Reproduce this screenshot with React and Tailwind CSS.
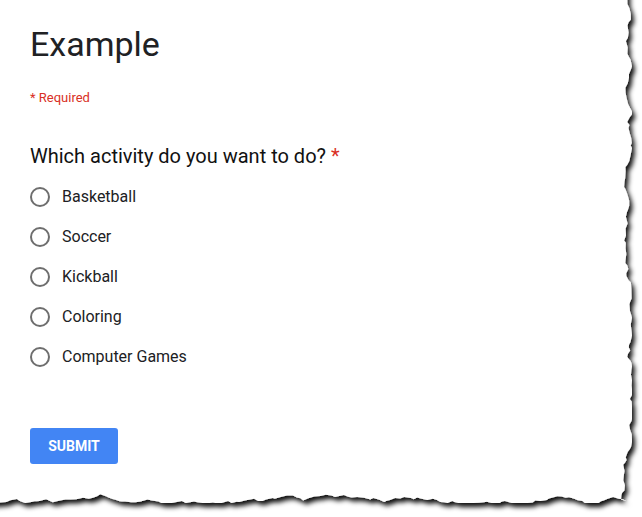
import React from 'react';

// deterministic jitter so the torn edge is the same on every render
function makeRand(seed) {
    let s = seed;
    return () => {
        s = (s * 1103515245 + 12345) % 2147483648;
        return s / 2147483648;
    };
}

function tornPath() {
    const rand = makeRand(42);
    const pts = [[-20, -20], [627, -20]];
    let x = 627;
    for (let y = 4; y < 500; y += 2 + rand() * 5) {
        x += (rand() - 0.5) * 5;
        x = Math.max(621, Math.min(632, x));
        pts.push([x, y]);
    }
    let y = 500;
    for (let xx = 626; xx > -10; xx -= 2 + rand() * 5) {
        y += (rand() - 0.5) * 4.5;
        y = Math.max(493, Math.min(503, y));
        pts.push([xx, y]);
    }
    pts.push([-20, 497]);
    return 'M' + pts.map((p) => `${p[0].toFixed(1)},${p[1].toFixed(1)}`).join(' L') + ' Z';
}

const PAPER = tornPath();

const options = ['Basketball', 'Soccer', 'Kickball', 'Coloring', 'Computer Games'];

export default function App() {
    return (
        <div className="relative h-[517px] w-[642px] overflow-hidden bg-white font-['Roboto',sans-serif]">
            <svg className="absolute inset-0" width="642" height="517">
                <defs>
                    <filter id="torn" x="-10%" y="-10%" width="120%" height="120%">
                        <feDropShadow dx="3" dy="4" stdDeviation="2.8" floodColor="#000" floodOpacity="0.95" />
                    </filter>
                </defs>
                <path d={PAPER} fill="#fff" filter="url(#torn)" />
            </svg>

            <div className="relative pl-[30px] pt-[22px]">
                <h1 className="text-[34px] leading-[44px] text-[#202124]">Example</h1>
                <p className="mt-[23px] text-[13px] leading-[18px] text-[#d93025]">* Required</p>

                <h2 className="mt-[37px] text-[20px] leading-[24px] text-[#111]">
                    Which activity do you want to do? <span className="text-[#d93025]">*</span>
                </h2>

                <div className="mt-[9px] flex flex-col">
                    {options.map((opt) => (
                        <label key={opt} className="flex h-[40px] items-center gap-[12px]">
                            <span className="h-[20px] w-[20px] rounded-full border-2 border-[#6e6e6e]" />
                            <span className="text-[16px] text-[#202124]">{opt}</span>
                        </label>
                    ))}
                </div>

                <button className="mt-[51px] h-[36px] w-[88px] rounded-[3px] bg-[#4285f4] text-[14px] font-bold text-white">
                    SUBMIT
                </button>
            </div>
        </div>
    );
}
